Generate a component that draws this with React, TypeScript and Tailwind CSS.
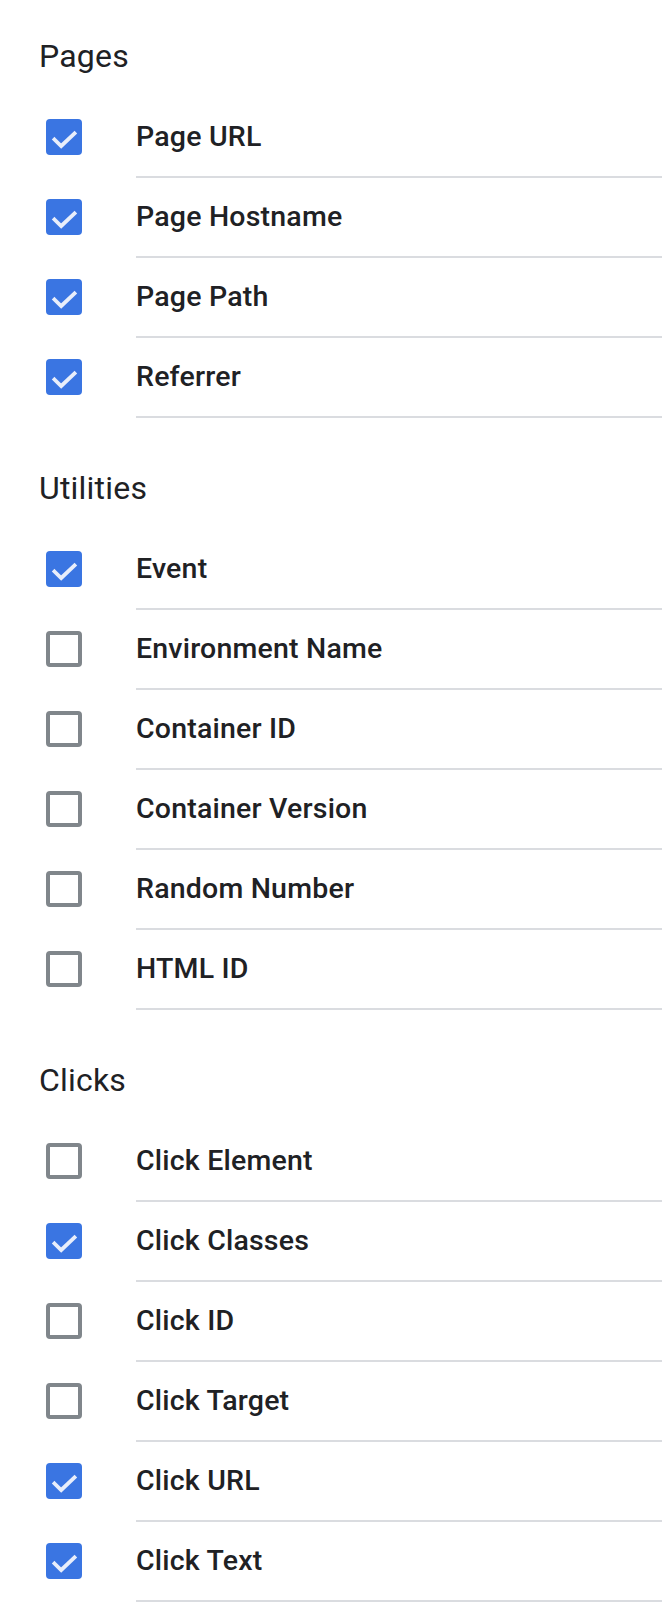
import React from "react";

type Item = { label: string; checked: boolean };
type Section = { title: string; items: Item[] };

const sections: Section[] = [
  {
    title: "Pages",
    items: [
      { label: "Page URL", checked: true },
      { label: "Page Hostname", checked: true },
      { label: "Page Path", checked: true },
      { label: "Referrer", checked: true },
    ],
  },
  {
    title: "Utilities",
    items: [
      { label: "Event", checked: true },
      { label: "Environment Name", checked: false },
      { label: "Container ID", checked: false },
      { label: "Container Version", checked: false },
      { label: "Random Number", checked: false },
      { label: "HTML ID", checked: false },
    ],
  },
  {
    title: "Clicks",
    items: [
      { label: "Click Element", checked: false },
      { label: "Click Classes", checked: true },
      { label: "Click ID", checked: false },
      { label: "Click Target", checked: false },
      { label: "Click URL", checked: true },
      { label: "Click Text", checked: true },
    ],
  },
];

function Checkbox({ checked }: { checked: boolean }) {
  if (checked) {
    return (
      <div className="w-[36px] h-[36px] rounded-[4px] bg-[#3a75e2] flex items-center justify-center">
        <svg width="36" height="36" viewBox="0 0 36 36">
          <polyline
            points="8.5,20.5 15.2,27 28.5,14.5"
            fill="none"
            stroke="#e8eefb"
            strokeWidth="3.8"
            strokeLinecap="square"
            strokeLinejoin="miter"
          />
        </svg>
      </div>
    );
  }
  return <div className="w-[36px] h-[36px] rounded-[4px] border-[4px] border-[#80868b] bg-white" />;
}

export default function App() {
  return (
    <div
      className="w-[662px] bg-white pt-[38px] pb-[14px] text-[#202124]"
      style={{ fontFamily: "Roboto, 'Noto Sans', sans-serif" }}
    >
      {sections.map((s, si) => (
        <div key={s.title} className={si > 0 ? "mt-[52px]" : ""}>
          <div className="pl-[39px] h-[36px] leading-[36px] text-[32px] font-normal mb-[24px] tracking-[0.2px]">{s.title}</div>
          <div className="flex flex-col">
            {s.items.map((it) => (
              <div key={it.label} className="flex items-start">
                <div className="ml-[46px] mt-[21px] w-[36px] shrink-0">
                  <Checkbox checked={it.checked} />
                </div>
                <div className="ml-[54px] flex-1 h-[80px] border-b-2 border-[#dadce0] flex items-center text-[28.5px] font-medium tracking-[0.2px]">
                  {it.label}
                </div>
              </div>
            ))}
          </div>
        </div>
      ))}
    </div>
  );
}
